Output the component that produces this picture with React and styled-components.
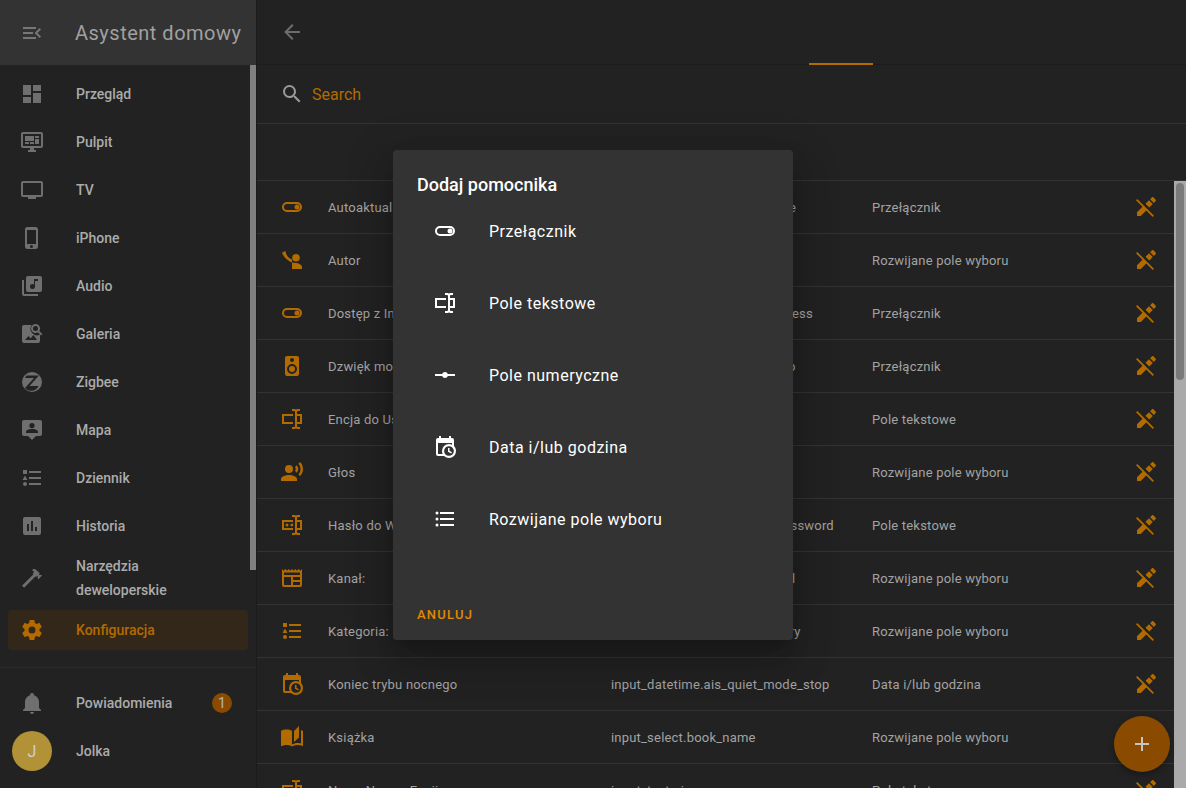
import React from "react";
import styled, { createGlobalStyle } from "styled-components";

const GlobalStyle = createGlobalStyle`
  html, body {
    margin: 0;
    height: 100%;
    background: #222222;
    font-family: Roboto, "Liberation Sans", sans-serif;
  }
`;

const ORANGE = "#b36b00";

const paths = {
  menuOpen: "M21,15.61L19.59,17L14.58,12L19.59,7L21,8.39L17.44,12L21,15.61M3,6H16V8H3V6M3,13V11H13V13H3M3,18V16H16V18H3Z",
  dashboard: "M13,3V9H21V3M13,21H21V11H13M3,21H11V15H3M3,13H11V3H3V13Z",
  monitor: "M21,16V4H3V16H21M21,2A2,2 0 0,1 23,4V16A2,2 0 0,1 21,18H14V20H16V22H8V20H10V18H3C1.89,18 1,17.1 1,16V4C1,2.89 1.89,2 3,2H21M5,6H14V11H5V6M15,6H19V8H15V6M19,9V14H15V9H19M5,12H9V14H5V12M10,12H14V14H10V12Z",
  tv: "M21,17H3V5H21M21,3H3A2,2 0 0,0 1,5V17A2,2 0 0,0 3,19H8V21H16V19H21A2,2 0 0,0 23,17V5A2,2 0 0,0 21,3Z",
  iphone: "M16,18H7V4H16M11.5,22A1.5,1.5 0 0,1 10,20.5A1.5,1.5 0 0,1 11.5,19A1.5,1.5 0 0,1 13,20.5A1.5,1.5 0 0,1 11.5,22M15.5,1H7.5A2.5,2.5 0 0,0 5,3.5V20.5A2.5,2.5 0 0,0 7.5,23H15.5A2.5,2.5 0 0,0 18,20.5V3.5A2.5,2.5 0 0,0 15.5,1Z",
  music: "M4,6H2V20A2,2 0 0,0 4,22H18V20H4M18,7H15V12.5A2.5,2.5 0 0,1 12.5,15A2.5,2.5 0 0,1 10,12.5A2.5,2.5 0 0,1 12.5,10C13.07,10 13.58,10.19 14,10.5V5H18M20,2H8A2,2 0 0,0 6,4V16A2,2 0 0,0 8,18H20A2,2 0 0,0 22,16V4A2,2 0 0,0 20,2Z",
  imageSearch: "M4 3H11.7A6.5 6.5 0 0 0 20 12.5V19a2 2 0 0 1-2 2H4a2 2 0 0 1-2-2V5a2 2 0 0 1 2-2zM5 18H17L13.5 13L10.5 16.5L8.5 14zM15.5 2a4.5 4.5 0 0 1 3.81 6.91L22.41 12L21 13.41L17.89 10.31A4.5 4.5 0 1 1 15.5 2zM15.5 4a2.5 2.5 0 1 0 0 5a2.5 2.5 0 0 0 0-5z",
  zigbee: "M12 2a10 10 0 1 0 0 20a10 10 0 0 0 0-20zM6.5 5.5H19L9.5 16H18.5A8 8 0 0 1 5 18L14 8H5z",
  tooltipAccount: "M4,2H20A2,2 0 0,1 22,4V16A2,2 0 0,1 20,18H16L12,22L8,18H4A2,2 0 0,1 2,16V4A2,2 0 0,1 4,2M12,5A2.6,2.6 0 0,0 9.4,7.6A2.6,2.6 0 0,0 12,10.2A2.6,2.6 0 0,0 14.6,7.6A2.6,2.6 0 0,0 12,5M18,15V13.5C18,11.8 14,11 12,11C10,11 6,11.8 6,13.5V15H18Z",
  listType: "M5,9.5L7.5,14H2.5L5,9.5M3,4H7V8H3V4M5,20A2,2 0 0,0 7,18A2,2 0 0,0 5,16A2,2 0 0,0 3,18A2,2 0 0,0 5,20M9,5V7H21V5H9M9,19H21V17H9V19M9,13H21V11H9V13Z",
  pollBox: "M17,17H15V13H17M13,17H11V7H13M9,17H7V10H9M19,3H5C3.89,3 3,3.89 3,5V19A2,2 0 0,0 5,21H19A2,2 0 0,0 21,19V5C21,3.89 20.1,3 19,3Z",
  hammer: "M2 19.63L13.43 8.2L12.72 7.5L14.14 6.07L12 3.89C13.2 2.7 15.09 2.7 16.27 3.89L19.87 7.5L18.45 8.91H21.29L22 9.62L18.45 13.21L17.74 12.5V9.62L16.27 11.04L15.56 10.33L4.13 21.76L2 19.63Z",
  cog: "M12,15.5A3.5,3.5 0 0,1 8.5,12A3.5,3.5 0 0,1 12,8.5A3.5,3.5 0 0,1 15.5,12A3.5,3.5 0 0,1 12,15.5M19.43,12.97C19.47,12.65 19.5,12.33 19.5,12C19.5,11.67 19.47,11.34 19.43,11L21.54,9.37C21.73,9.22 21.78,8.95 21.66,8.73L19.66,5.27C19.54,5.05 19.27,4.96 19.05,5.05L16.56,6.05C16.04,5.66 15.5,5.32 14.87,5.07L14.5,2.42C14.46,2.18 14.25,2 14,2H10C9.75,2 9.54,2.18 9.5,2.42L9.13,5.07C8.5,5.32 7.96,5.66 7.44,6.05L4.95,5.05C4.73,4.96 4.46,5.05 4.34,5.27L2.34,8.73C2.21,8.95 2.27,9.22 2.46,9.37L4.57,11C4.53,11.34 4.5,11.67 4.5,12C4.5,12.33 4.53,12.65 4.57,12.97L2.46,14.63C2.27,14.78 2.21,15.05 2.34,15.27L4.34,18.73C4.46,18.95 4.73,19.03 4.95,18.95L7.44,17.94C7.96,18.34 8.5,18.68 9.13,18.93L9.5,21.58C9.54,21.82 9.75,22 10,22H14C14.25,22 14.46,21.82 14.5,21.58L14.87,18.93C15.5,18.67 16.04,18.34 16.56,17.94L19.05,18.95C19.27,19.03 19.54,18.95 19.66,18.73L21.66,15.27C21.78,15.05 21.73,14.78 21.54,14.63L19.43,12.97Z",
  bell: "M21,19V20H3V19L5,17V11C5,7.9 7.03,5.17 10,4.29C10,4.19 10,4.1 10,4A2,2 0 0,1 12,2A2,2 0 0,1 14,4C14,4.1 14,4.19 14,4.29C16.97,5.17 19,7.9 19,11V17L21,19M14,21A2,2 0 0,1 12,23A2,2 0 0,1 10,21",
  back: "M20,11V13H8L13.5,18.5L12.08,19.92L4.16,12L12.08,4.08L13.5,5.5L8,11H20Z",
  search: "M9.5,3A6.5,6.5 0 0,1 16,9.5C16,11.11 15.41,12.59 14.44,13.73L14.71,14H15.5L20.5,19L19,20.5L14,15.5V14.71L13.73,14.44C12.59,15.41 11.11,16 9.5,16A6.5,6.5 0 0,1 3,9.5A6.5,6.5 0 0,1 9.5,3M9.5,5C7,5 5,7 5,9.5C5,12 7,14 9.5,14C12,14 14,12 14,9.5C14,7 12,5 9.5,5Z",
  toggle: "M7 7h10a5 5 0 0 1 0 10H7a5 5 0 0 1 0-10zM7 9a3 3 0 0 0 0 6h10a3 3 0 0 0 0-6zM17 9.5a2.5 2.5 0 1 1 0 5a2.5 2.5 0 0 1 0-5z",
  textbox: "M17,7H22V17H17V19A1,1 0 0,0 18,20H20V22H17.5C16.95,22 16,21.55 16,21C16,21.55 15.05,22 14.5,22H12V20H14A1,1 0 0,0 15,19V5A1,1 0 0,0 14,4H12V2H14.5C15.05,2 16,2.45 16,3C16,2.45 16.95,2 17.5,2H20V4H18A1,1 0 0,0 17,5V7M2,7H13V9H4V15H13V17H2V7M20,15V9H17V15H20Z",
  password: "M17,7H22V17H17V19A1,1 0 0,0 18,20H20V22H17.5C16.95,22 16,21.55 16,21C16,21.55 15.05,22 14.5,22H12V20H14A1,1 0 0,0 15,19V5A1,1 0 0,0 14,4H12V2H14.5C15.05,2 16,2.45 16,3C16,2.45 16.95,2 17.5,2H20V4H18A1,1 0 0,0 17,5V7M2,7H13V9H4V15H13V17H2V7M20,15V9H17V15H20M8.5,12A1.5,1.5 0 0,0 7,10.5A1.5,1.5 0 0,0 5.5,12A1.5,1.5 0 0,0 7,13.5A1.5,1.5 0 0,0 8.5,12M13,10.89C12.39,10.33 11.44,10.38 10.88,11C10.32,11.6 10.37,12.55 11,13.11C11.55,13.63 12.43,13.63 13,13.11V10.89Z",
  vertex: "M2 11H9.17C9.58 9.83 10.69 9 12 9S14.42 9.83 14.83 11H22V13H14.83C14.42 14.17 13.31 15 12 15S9.58 14.17 9.17 13H2V11Z",
  calendarClock: "M15,13H16.5V15.82L18.94,17.23L18.19,18.53L15,16.69V13M19,8H5V19H9.67C9.24,18.09 9,17.07 9,16A7,7 0 0,1 16,9C17.07,9 18.09,9.24 19,9.67V8M5,21C3.89,21 3,20.1 3,19V5C3,3.89 3.89,3 5,3H6V1H8V3H16V1H18V3H19A2,2 0 0,1 21,5V11.1C22.24,12.36 23,14.09 23,16A7,7 0 0,1 16,23C14.09,23 12.36,22.24 11.1,21H5M16,11.15A4.85,4.85 0 0,0 11.15,16C11.15,18.68 13.32,20.85 16,20.85A4.85,4.85 0 0,0 20.85,16C20.85,13.32 18.68,11.15 16,11.15Z",
  list: "M7,5H21V7H7V5M7,13V11H21V13H7M4,4.5A1.5,1.5 0 0,1 5.5,6A1.5,1.5 0 0,1 4,7.5A1.5,1.5 0 0,1 2.5,6A1.5,1.5 0 0,1 4,4.5M4,10.5A1.5,1.5 0 0,1 5.5,12A1.5,1.5 0 0,1 4,13.5A1.5,1.5 0 0,1 2.5,12A1.5,1.5 0 0,1 4,10.5M7,19V17H21V19H7M4,16.5A1.5,1.5 0 0,1 5.5,18A1.5,1.5 0 0,1 4,19.5A1.5,1.5 0 0,1 2.5,18A1.5,1.5 0 0,1 4,16.5Z",
  pencilOff: "M18.66,2C18.4,2 18.16,2.09 17.97,2.28L16.13,4.13L19.88,7.88L21.72,6.03C22.11,5.64 22.11,5 21.72,4.63L19.38,2.28C19.18,2.09 18.91,2 18.66,2M3.28,4L2,5.27L8.47,11.74L3,17.25V21H6.75L12.26,15.53L18.73,22L20,20.72L3.28,4M15.04,5.22L11.5,8.75L15.25,12.5L18.78,8.96L15.04,5.22Z",
  author: "M2 4.5L5.5 3C6 7 8 10 12 11.5V21H22V19C22 16.5 18 15 15.5 15C11 15 4 11 2 4.5zM16 6a3.8 3.8 0 1 0 0 7.6a3.8 3.8 0 0 0 0-7.6z",
  speaker: "M12,12A3,3 0 0,0 9,15A3,3 0 0,0 12,18A3,3 0 0,0 15,15A3,3 0 0,0 12,12M12,20A5,5 0 0,1 7,15A5,5 0 0,1 12,10A5,5 0 0,1 17,15A5,5 0 0,1 12,20M12,4A2,2 0 0,1 14,6A2,2 0 0,1 12,8C10.89,8 10,7.1 10,6C10,4.89 10.89,4 12,4M17,2H7C5.89,2 5,2.89 5,4V20A2,2 0 0,0 7,22H17A2,2 0 0,0 19,20V4C19,2.89 18.1,2 17,2Z",
  voice: "M9,5A4,4 0 0,1 13,9A4,4 0 0,1 9,13A4,4 0 0,1 5,9A4,4 0 0,1 9,5M9,15C11.67,15 17,16.34 17,19V21H1V19C1,16.34 6.33,15 9,15M16.76,5.36C18.78,7.56 18.78,10.61 16.76,12.63L15.08,10.94C15.92,9.76 15.92,8.23 15.08,7.05L16.76,5.36M20.07,2C24,6.05 23.97,12.11 20.07,16L18.44,14.37C21.21,11.19 21.21,6.65 18.44,3.63L20.07,2Z",
  newspaper: "M2 3L3.67 4.67L5.33 3L7 4.67L8.67 3L10.33 4.67L12 3L13.67 4.67L15.33 3L17 4.67L18.67 3L20.33 4.67L22 3V19a2 2 0 0 1-2 2H4a2 2 0 0 1-2-2zM4 6.5V9H20V6.5zM4 11V19H11V11zM13 11V14H20V11zM13 16V19H20V16z",
  book: "M19 1L14 6V17L19 12.5V1M21 5V18.5C19.9 18.15 18.7 18 17.5 18C15.8 18 13.35 18.65 12 19.5V6C10.55 4.9 8.45 4.5 6.5 4.5C4.55 4.5 2.45 4.9 1 6V20.65C1 20.9 1.25 21.15 1.5 21.15C1.6 21.15 1.65 21.1 1.75 21.1C3.1 20.45 5.05 20 6.5 20C8.45 20 10.55 20.4 12 21.5C13.35 20.65 15.8 20 17.5 20C19.15 20 20.85 20.3 22.25 21.05C22.35 21.1 22.4 21.1 22.5 21.1C22.75 21.1 23 20.85 23 20.6V6C22.4 5.55 21.75 5.25 21 5Z",
  plus: "M19,13H13V19H11V13H5V11H11V5H13V11H19V13Z"
};

const evenOdd = ["imageSearch", "zigbee", "toggle", "newspaper", "author"];

const Svg = styled.svg`
  width: 24px;
  height: 24px;
  flex: none;
  fill: ${({ $color }) => $color || "currentColor"};
`;

const Icon = ({ name, color }) => (
  <Svg viewBox="0 0 24 24" $color={color}>
    <path d={paths[name]} fillRule={evenOdd.includes(name) ? "evenodd" : "nonzero"} />
  </Svg>
);

const Page = styled.div`
  display: flex;
  height: 100vh;
  overflow: hidden;
  position: relative;
  background: #222222;
`;

const Sidebar = styled.aside`
  width: 257px;
  flex: none;
  box-sizing: border-box;
  border-right: 1px solid #1b1b1b;
  display: flex;
  flex-direction: column;
  color: #ababab;
`;

const SideHeader = styled.div`
  height: 65px;
  flex: none;
  box-sizing: border-box;
  background: #333333;
  display: flex;
  align-items: center;
  gap: 31px;
  padding-left: 20px;
  color: #777777;
`;

const Brand = styled.div`
  font-size: 20px;
  letter-spacing: 0.5px;
  color: #a0a0a0;
`;

const Nav = styled.nav`
  position: relative;
  height: 602px;
  flex: none;
  overflow: hidden;
  padding-top: 9px;
  box-sizing: border-box;
`;

const NavThumb = styled.div`
  position: absolute;
  top: 0;
  right: 0;
  width: 6px;
  height: 505px;
  background: #808080;
`;

const NavItem = styled.div`
  display: flex;
  align-items: center;
  gap: 32px;
  margin: 0 8px 8px;
  padding-left: 12px;
  width: 240px;
  box-sizing: border-box;
  min-height: ${({ $tall }) => ($tall ? 48 : 40)}px;
  border-radius: 4px;
  font-size: 14px;
  font-weight: 500;
  line-height: 24px;
  color: ${({ $active }) => ($active ? ORANGE : "#ababab")};
  background: ${({ $active }) => ($active ? "#33271a" : "transparent")};
  svg {
    fill: ${({ $active }) => ($active ? ORANGE : "#6f6f6f")};
  }
`;

const NavBottom = styled.div`
  border-top: 1px solid #2c2c2c;
  padding-top: 11px;
`;

const BottomItem = styled.div`
  display: flex;
  align-items: center;
  height: 48px;
  padding-left: 20px;
  gap: 32px;
  font-size: 14px;
  font-weight: 500;
  color: #ababab;
  svg {
    fill: #6f6f6f;
  }
`;

const UserItem = styled(BottomItem)`
  padding-left: 12px;
  gap: 24px;
`;

const Badge = styled.span`
  width: 20px;
  height: 20px;
  margin-left: auto;
  margin-right: 24px;
  border-radius: 50%;
  background: #8a4b00;
  color: #b8b8b8;
  font-size: 14px;
  font-weight: 400;
  display: flex;
  align-items: center;
  justify-content: center;
`;

const Avatar = styled.div`
  width: 40px;
  height: 40px;
  border-radius: 50%;
  background: #b19237;
  color: #cfcfcf;
  font-size: 16px;
  font-weight: 400;
  display: flex;
  align-items: center;
  justify-content: center;
`;

const Main = styled.main`
  flex: 1;
  min-width: 0;
  display: flex;
  flex-direction: column;
`;

const Toolbar = styled.div`
  height: 65px;
  flex: none;
  box-sizing: border-box;
  border-bottom: 1px solid #1c1c1c;
  display: flex;
  padding-left: 23px;
  align-items: center;
  color: #6c6c6c;
`;

const Tab = styled.div`
  align-self: flex-end;
  width: 64px;
  height: 2px;
  margin-left: 505px;
  margin-bottom: -1px;
  background: ${ORANGE};
`;

const SearchRow = styled.div`
  height: 59px;
  flex: none;
  box-sizing: border-box;
  border-bottom: 1px solid #333333;
  display: flex;
  align-items: center;
  gap: 8px;
  padding-left: 23px;
  color: #9a9a9a;
`;

const SearchHint = styled.span`
  color: ${ORANGE};
  font-size: 16px;
`;

const HeadRow = styled.div`
  height: 57px;
  flex: none;
  box-sizing: border-box;
  border-bottom: 1px solid #333333;
`;

const TableWrap = styled.div`
  flex: 1;
  min-height: 0;
  display: flex;
`;

const Rows = styled.div`
  flex: 1;
  min-width: 0;
  overflow: hidden;
`;

const Row = styled.div`
  height: 53px;
  box-sizing: border-box;
  border-bottom: 1px solid #333333;
  display: grid;
  grid-template-columns: 71px 283px 261px 1fr 48px;
  padding-right: 4px;
  align-items: center;
  font-size: 13px;
  letter-spacing: 0.2px;
  color: #a3a3a3;
`;

const RowIcon = styled.div`
  padding-left: 23px;
  display: flex;
`;

const Cell = styled.div`
  white-space: nowrap;
`;

const ScrollTrack = styled.div`
  width: 12px;
  flex: none;
  box-sizing: border-box;
  padding: 2px;
  background: #aaaaaa;
`;

const ScrollThumb = styled.div`
  height: 197px;
  border-radius: 4px;
  background: #7a7a7a;
`;

const Fab = styled.div`
  position: absolute;
  left: 1114px;
  top: 716px;
  width: 56px;
  height: 56px;
  border-radius: 50%;
  background: #8a4b00;
  color: #c4c4c4;
  display: flex;
  align-items: center;
  justify-content: center;
  box-shadow: 0 3px 6px rgba(0, 0, 0, 0.3);
`;

const Dialog = styled.div`
  position: absolute;
  left: 393px;
  top: 150px;
  width: 400px;
  height: 490px;
  box-sizing: border-box;
  background: #333333;
  border-radius: 4px;
  padding-top: 24px;
  display: flex;
  flex-direction: column;
  color: #ffffff;
  box-shadow: 0 11px 15px -7px rgba(0, 0, 0, 0.2),
    0 24px 38px 3px rgba(0, 0, 0, 0.14), 0 9px 46px 8px rgba(0, 0, 0, 0.12);
`;

const DialogTitle = styled.div`
  padding-left: 24px;
  font-size: 18px;
  font-weight: 500;
  line-height: 21px;
`;

const DialogList = styled.div`
  flex: 1;
`;

const DialogItem = styled.div`
  height: 72px;
  display: flex;
  align-items: center;
  gap: 32px;
  padding-left: 40px;
  font-size: 16px;
  letter-spacing: 0.5px;
`;

const CancelButton = styled.div`
  padding: 0 0 18px 24px;
  font-size: 13px;
  font-weight: 500;
  letter-spacing: 1.25px;
  color: #e08a00;
`;

const navItems = [
  ["dashboard", "Przegląd"],
  ["monitor", "Pulpit"],
  ["tv", "TV"],
  ["iphone", "iPhone"],
  ["music", "Audio"],
  ["imageSearch", "Galeria"],
  ["zigbee", "Zigbee"],
  ["tooltipAccount", "Mapa"],
  ["listType", "Dziennik"],
  ["pollBox", "Historia"]
];

const rows = [
  ["toggle", "Autoaktualizacje", "input_boolean.ais_auto_update", "Przełącznik"],
  ["author", "Autor", "input_select.book_autor", "Rozwijane pole wyboru"],
  ["toggle", "Dostęp z Internetu", "input_boolean.ais_remote_access", "Przełącznik"],
  ["speaker", "Dzwięk mono", "input_boolean.ais_audio_mono", "Przełącznik"],
  ["textbox", "Encja do Usługi", "input_text.ais_service_entity", "Pole tekstowe"],
  ["voice", "Głos", "input_select.assistant_voice", "Rozwijane pole wyboru"],
  ["password", "Hasło do WiFi", "input_text.ais_android_wifi_password", "Pole tekstowe"],
  ["newspaper", "Kanał:", "input_select.rss_news_channel", "Rozwijane pole wyboru"],
  ["listType", "Kategoria:", "input_select.rss_news_category", "Rozwijane pole wyboru"],
  ["calendarClock", "Koniec trybu nocnego", "input_datetime.ais_quiet_mode_stop", "Data i/lub godzina"],
  ["book", "Książka", "input_select.book_name", "Rozwijane pole wyboru"],
  ["textbox", "Nowa Nazwa Encji", "input_text.ais_new_name", "Pole tekstowe"]
];

const helpers = [
  ["toggle", "Przełącznik"],
  ["textbox", "Pole tekstowe"],
  ["vertex", "Pole numeryczne"],
  ["calendarClock", "Data i/lub godzina"],
  ["list", "Rozwijane pole wyboru"]
];

export default function App() {
  return (
    <Page>
      <GlobalStyle />
      <Sidebar>
        <SideHeader>
          <Icon name="menuOpen" />
          <Brand>Asystent domowy</Brand>
        </SideHeader>
        <Nav>
          {navItems.map(([icon, label]) => (
            <NavItem key={label}>
              <Icon name={icon} />
              {label}
            </NavItem>
          ))}
          <NavItem $tall>
            <Icon name="hammer" />
            <span>
              Narzędzia
              <br />
              deweloperskie
            </span>
          </NavItem>
          <NavItem $active>
            <Icon name="cog" />
            Konfiguracja
          </NavItem>
          <NavThumb />
        </Nav>
        <NavBottom>
          <BottomItem>
            <Icon name="bell" />
            Powiadomienia
            <Badge>1</Badge>
          </BottomItem>
          <UserItem>
            <Avatar>J</Avatar>
            Jolka
          </UserItem>
        </NavBottom>
      </Sidebar>
      <Main>
        <Toolbar>
          <Icon name="back" />
          <Tab />
        </Toolbar>
        <SearchRow>
          <Icon name="search" />
          <SearchHint>Search</SearchHint>
        </SearchRow>
        <HeadRow />
        <TableWrap>
          <Rows>
            {rows.map(([icon, name, id, type]) => (
              <Row key={id}>
                <RowIcon>
                  <Icon name={icon} color={ORANGE} />
                </RowIcon>
                <Cell>{name}</Cell>
                <Cell>{id}</Cell>
                <Cell>{type}</Cell>
                <RowIcon as="div" style={{ paddingLeft: 12 }}>
                  <Icon name="pencilOff" color={ORANGE} />
                </RowIcon>
              </Row>
            ))}
          </Rows>
          <ScrollTrack>
            <ScrollThumb />
          </ScrollTrack>
        </TableWrap>
      </Main>
      <Fab>
        <Icon name="plus" />
      </Fab>
      <Dialog>
        <DialogTitle>Dodaj pomocnika</DialogTitle>
        <DialogList>
          {helpers.map(([icon, label]) => (
            <DialogItem key={label}>
              <Icon name={icon} />
              {label}
            </DialogItem>
          ))}
        </DialogList>
        <CancelButton>ANULUJ</CancelButton>
      </Dialog>
    </Page>
  );
}
